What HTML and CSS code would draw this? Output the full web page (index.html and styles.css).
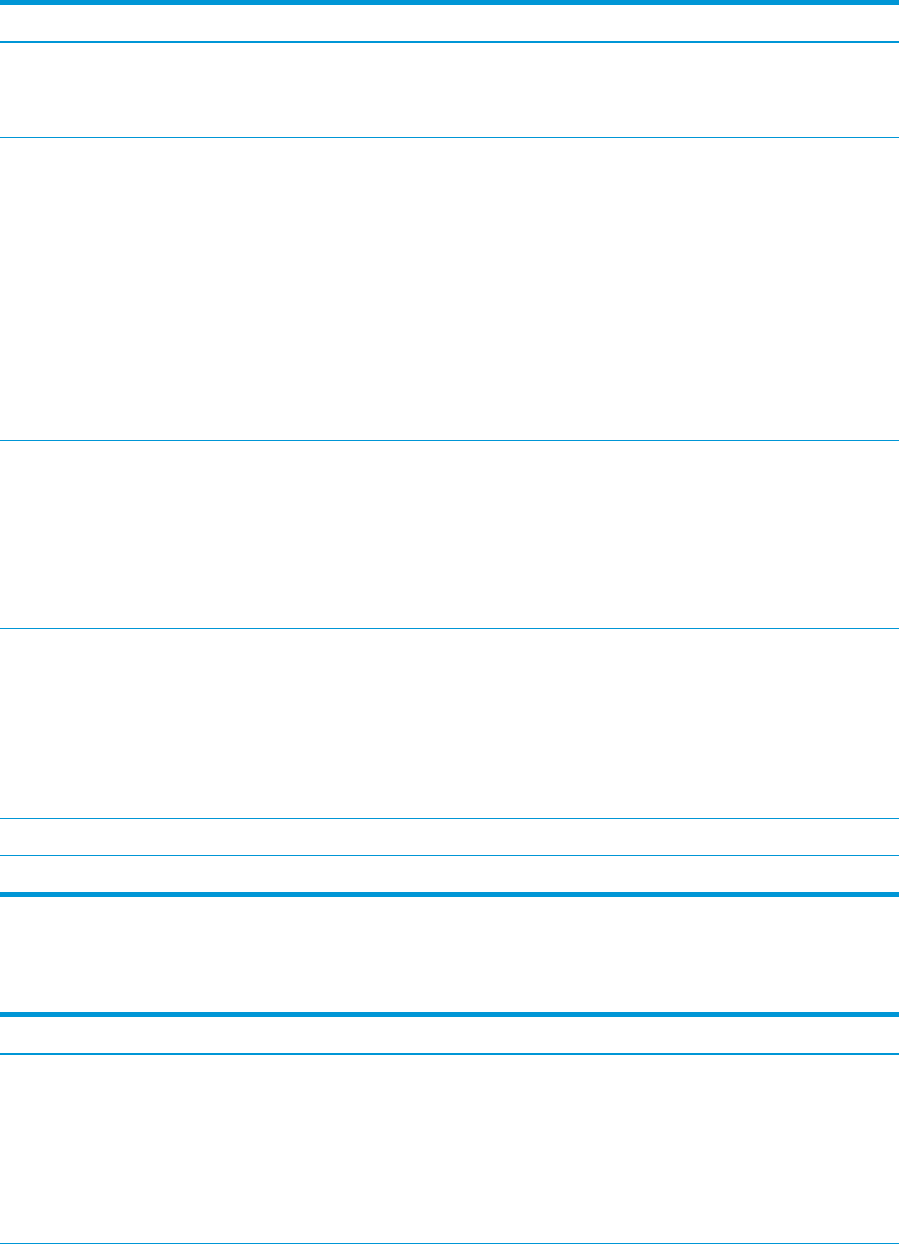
FILE: index.html
```html
<!DOCTYPE html>
<html>
<head>
<meta charset="utf-8">
<link rel="stylesheet" href="styles.css">
</head>
<body>
<div class="page">
  <div class="table t1">
    <div class="row head"></div>
    <div class="row r1"></div>
    <div class="row r2"></div>
    <div class="row r3"></div>
    <div class="row r4"></div>
    <div class="row r5"></div>
    <div class="row r6 last"></div>
  </div>
  <div class="table t2">
    <div class="row head"></div>
    <div class="row r7"></div>
  </div>
</div>
</body>
</html>
```
FILE: styles.css
```css
html, body {
  margin: 0;
  padding: 0;
  background: #ffffff;
  font-family: "Liberation Sans", Arial, sans-serif;
}
.page {
  width: 899px;
  display: flex;
  flex-direction: column;
}
.table {
  display: flex;
  flex-direction: column;
  border-top: 5px solid #0096d6;
}
.t1 {
  border-bottom: 5px solid #0096d6;
}
.t2 {
  margin-top: 115px;
}
.row {
  box-sizing: content-box;
  border-bottom: 1px solid #0096d6;
}
.row.head {
  height: 36px;
  border-bottom: 2px solid #0096d6;
}
.row.last {
  border-bottom: none;
}
.r1 { height: 94px; }
.r2 { height: 302px; }
.r3 { height: 187px; }
.r4 { height: 189px; }
.r5 { height: 36px; }
.r6 { height: 36px; }
.r7 { height: 188px; }
```
